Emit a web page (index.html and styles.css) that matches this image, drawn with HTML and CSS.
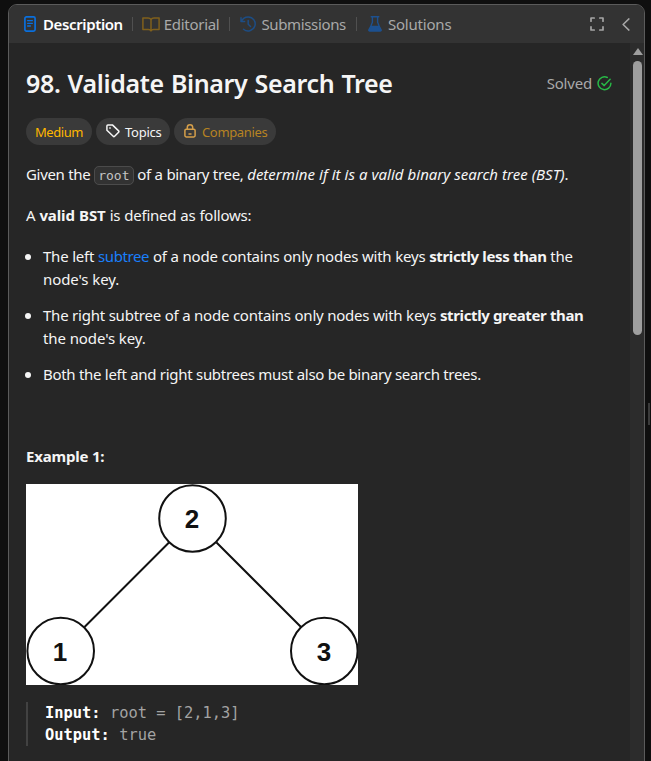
FILE: index.html
```html
<!DOCTYPE html>
<html lang="en">
<head>
<meta charset="utf-8">
<title>Validate Binary Search Tree</title>
<link rel="stylesheet" href="styles.css">
</head>
<body>
<main class="panel">
  <header class="tabs">
    <div class="tab active">
      <svg width="12" height="16" viewBox="0 0 12 16" fill="none" stroke="#0a6fdc" stroke-linecap="round"><rect x=".9" y=".9" width="10.2" height="14.2" rx="1.6" stroke-width="1.7"/><path d="M3.6 4.6h4.8M3.6 7.3h4.800M3.600 10h2.800" stroke-width="1.300"/></svg>
      <span class="t1">Description</span>
    </div>
    <i class="sep"></i>
    <div class="tab tab-ed">
      <svg width="18" height="15" viewBox="0 0 18 15" fill="none" stroke="#80601c" stroke-width="1.5" stroke-linejoin="round"><path d="M9 2.600C8.400 1.500 7.400 1 6 1H.9v11.600h5.600c1.300 0 2.100.4 2.500 1.300.4-.9 1.200-1.300 2.500-1.300h5.600V1H12c-1.400 0-2.400.5-3 1.600zM9 2.600v11"/></svg>
      <span class="t2">Editorial</span>
    </div>
    <i class="sep"></i>
    <div class="tab tab-sub">
      <svg width="16" height="16" viewBox="0 0 16 16" fill="none" stroke="#1d4d84" stroke-width="1.5" stroke-linecap="round" stroke-linejoin="round"><path d="M1 1.800v3.600h3.600M1.400 5.200C2.600 2.600 5.200.9 8.200.9a7 7 0 1 1-4.600 12.300M8.200 4.600v3.700l2.300 2.200"/></svg>
      <span class="t3">Submissions</span>
    </div>
    <i class="sep"></i>
    <div class="tab tab-sol">
      <svg width="14" height="16" viewBox="0 0 14 16" fill="none" stroke="#1d5190" stroke-width="1.400" stroke-linecap="round" stroke-linejoin="round"><path d="M3.200.8h7.600M4.400 1v5.200L3 9.700M9.600 1v5.200L11 9.700"/><path d="M2.800 10.400h8.400l1.800 3.200c.4.800 0 1.500-.9 1.500H1.900c-.9 0-1.300-.7-.9-1.500z" fill="#1d5190"/></svg>
      <span class="t4">Solutions</span>
    </div>
    <div class="tools">
      <svg width="14" height="14" viewBox="0 0 14 14" fill="none" stroke="#a6a6a6" stroke-width="1.700" stroke-linejoin="round" stroke-linecap="round"><path d="M1 4.200V1h3.200M9.800 1H13v3.200M13 9.800V13H9.800M4.200 13H1V9.800"/></svg>
      <svg width="8" height="13" viewBox="0 0 8 13" fill="none" stroke="#a6a6a6" stroke-width="1.500" stroke-linecap="round" stroke-linejoin="round"><path d="M6.900.9 1.100 6.500l5.800 5.600"/></svg>
    </div>
  </header>
  <div class="view">
    <article class="content">
      <div class="head">
        <h1>98. Validate Binary Search Tree</h1>
        <div class="solved"><span>Solved</span>
          <svg width="15" height="15" viewBox="0 0 15 15" fill="none" stroke="#28b846" stroke-width="1.500" stroke-linecap="round" stroke-linejoin="round"><path d="M10.300 1.500A6.400 6.400 0 1 0 13.900 7.300M4.900 7.400l2.300 2.200 5.900-6.300"/></svg>
        </div>
      </div>
      <div class="chips">
        <span class="chip medium">Medium</span>
        <span class="chip topics"><svg width="14" height="14" viewBox="0 0 14 14" fill="none" stroke="#f5f5f5" stroke-width="1.500" stroke-linejoin="round"><path d="M.9 1.900q0-1 1-1h4.500l6.200 6q.7.700 0 1.400l-4 4q-.7.700-1.400 0L.9 6.300z"/><circle cx="4" cy="4" r=".5" fill="#f5f5f5" stroke-width=".7"/></svg>Topics</span>
        <span class="chip companies"><svg width="12" height="14" viewBox="0 0 12 14" fill="none" stroke="#d59f4a" stroke-width="1.500" stroke-linejoin="round" stroke-linecap="round"><rect x=".9" y="5.300" width="10.200" height="7.600" rx="1.300"/><path d="M3.300 5V3.500a2.700 2.700 0 0 1 5.400 0V5M5 10h2"/></svg>Companies</span>
      </div>
      <p class="p1">Given the <code>root</code> of a binary tree, <em>determine if it is a valid binary search tree (BST)</em>.</p>
      <p class="p2">A <strong>valid BST</strong> is defined as follows:</p>
      <ul>
        <li class="first">The left <a>subtree</a> of a node contains only nodes with keys <strong>strictly less than</strong> the<br><span class="end">node's key.</span></li>
        <li>The right subtree of a node contains only nodes with keys <strong>strictly greater than</strong><br><span class="end">the node's key.</span></li>
        <li class="last">Both the left and right subtrees must also be binary search trees.</li>
      </ul>
      <p class="ex"><strong>Example 1:</strong></p>
      <svg class="tree" width="332" height="201" viewBox="0 0 332 201">
        <rect width="332" height="201" fill="#fff"/>
        <g fill="none" stroke="#111" stroke-width="2"><circle cx="166.500" cy="34.500" r="33.300"/><circle cx="34.700" cy="167" r="33.300"/><circle cx="298.300" cy="167" r="33.300"/><path d="M143 58.500 58.500 143M190.500 58.500 275 143"/></g>
        <g class="num"><text x="166" y="44">2</text><text x="34" y="176.500">1</text><text x="298" y="176.500">3</text></g>
      </svg>
      <pre><b>Input:</b> root = [2,1,3]
<b>Output:</b> true</pre>
    </article>
    <div class="scroll"><i class="arrow"></i><i class="thumb"></i></div>
  </div>
</main>
<i class="grip"></i>
</body>
</html>
```
FILE: styles.css
```css
* { box-sizing: border-box; }
html, body { margin: 0; height: 100%; overflow: hidden; }
body {
  position: relative;
  background: #0f0f0f;
  color: #f5f5f5;
  font: 15px/23px "Noto Sans", "Open Sans", sans-serif;
}
.panel {
  margin: 4px 6px 0 8px;
  height: 780px;
  display: flex;
  flex-direction: column;
  background: #262626;
  border: 1px solid #5b5b5b;
  border-radius: 9px;
  overflow: hidden;
}
.tabs {
  height: 38px;
  flex: none;
  display: flex;
  align-items: center;
  background: #333;
  color: #a9a9a9;
  padding: 0 14px 0 15px;
}
.tab { display: flex; align-items: center; }
.tab span { white-space: nowrap; }
.tab svg { flex: none; }
.active { color: #fff; font-weight: 600; gap: 7px; margin-right: -1px; }
.tab-ed { gap: 4px; margin-left: -1px; }
.tab-sub { gap: 5px; }
.tab-sol { gap: 6px; margin-left: 1px; }
.t1 { letter-spacing: -0.38px; }
.t2 { letter-spacing: -0.3px; }
.t3 { letter-spacing: -0.35px; }
.t4 { letter-spacing: -0.2px; }
.sep { width: 1px; height: 14px; background: #505050; margin: 0 10px; }
.tools { margin-left: auto; display: flex; align-items: center; gap: 18px; }
.view { flex: 1; display: flex; min-height: 0; }
.content { flex: 1; padding: 0 18px 0 17px; }
.head { display: flex; justify-content: space-between; align-items: center; margin-top: 23px; height: 34px; }
h1 { margin: 0; font-size: 25px; line-height: 34px; font-weight: 600; letter-spacing: -0.36px; word-spacing: 1px; white-space: nowrap; }
.solved { display: flex; align-items: center; gap: 5px; color: #a9a9a9; letter-spacing: -0.2px; }
.chips { display: flex; gap: 4px; margin-top: 18px; }
.chip {
  height: 27px;
  border-radius: 14px;
  background: #3a3a3a;
  display: flex;
  align-items: center;
  padding: 1px 9px 0;
  font-size: 13px;
}
.chip svg { flex: none; margin-top: -2px; }
.medium { color: #ffb700; width: 66px; letter-spacing: -0.45px; }
.topics { width: 74px; gap: 5px; padding-left: 10px; letter-spacing: -0.25px; }
.companies { width: 102px; gap: 6px; padding-left: 10px; color: #b78322; letter-spacing: -0.35px; }
p { margin: 0; white-space: nowrap; }
.p1, .p2 { margin-top: 18px; letter-spacing: -0.25px; word-spacing: 0.15px; }
.p1 { letter-spacing: -0.32px; }
.p1 em { letter-spacing: 0; }
.p2 { word-spacing: 0.4px; }
.p2 strong { letter-spacing: -0.1px; }
code {
  font: 13px/18px "DejaVu Sans Mono", monospace;
  letter-spacing: 0;
  color: #c4c4c4;
  background: #323232;
  border: 1px solid #4b4b4b;
  border-radius: 5px;
  padding: 1px 3px;
}
ul { margin: 18px 0 0; padding: 0 0 0 17px; list-style: none; }
li { position: relative; margin-bottom: 13px; white-space: nowrap; letter-spacing: -0.22px; }
li::before {
  content: "";
  position: absolute;
  left: -18px;
  top: 9px;
  width: 6px;
  height: 6px;
  border-radius: 50%;
  background: #f5f5f5;
}
li strong { letter-spacing: -0.37px; }
li.first { word-spacing: 0.12px; }
li.last { letter-spacing: -0.29px; }
.end { letter-spacing: -0.1px; }
a { color: #1a7ffa; letter-spacing: -0.4px; }
.ex { margin-top: 59px; letter-spacing: -0.2px; }
.tree { display: block; margin-top: 16px; }
.num { font: bold 26px "Liberation Sans", sans-serif; text-anchor: middle; fill: #111; }
pre {
  margin: 17px 0 0;
  padding: 0 0 0 17px;
  border-left: 2px solid #424242;
  color: #a3a3a3;
  font: 15.4px/22px "DejaVu Sans Mono", monospace;
}
pre b { color: #fff; }
.scroll { width: 14px; background: #2c2c2c; display: flex; flex-direction: column; align-items: center; padding: 5px 1px 0 2px; }
.arrow { border: 5px solid transparent; border-top: 0; border-bottom: 7px solid #9f9f9f; }
.thumb { width: 9px; height: 274px; margin-top: 6px; border-radius: 5px; background: #9f9f9f; }
.grip { position: absolute; left: 648px; top: 403px; width: 2px; height: 22px; background: #3b3b3b; }
```
